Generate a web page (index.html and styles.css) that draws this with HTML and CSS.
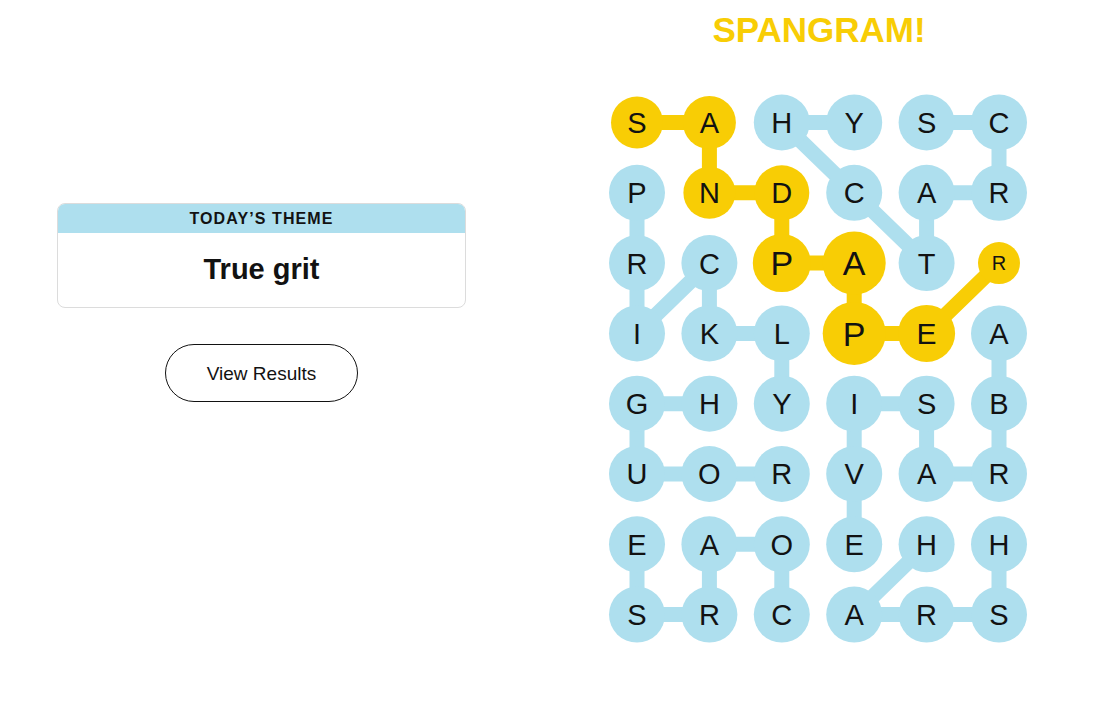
FILE: index.html
```html
<!DOCTYPE html>
<html lang="en">
<head>
<meta charset="utf-8">
<title>Strands</title>
<link rel="stylesheet" href="styles.css">
</head>
<body>
<main class="page">
  <section class="left">
    <div class="theme-card">
      <div class="theme-head">Today’s Theme</div>
      <div class="theme-body">True grit</div>
    </div>
    <button class="results-btn" type="button">View Results</button>
  </section>
  <section class="right">
    <h1 class="spangram">SPANGRAM!</h1>
    <svg class="board" width="440" height="560" viewBox="0 0 440 560" xmlns="http://www.w3.org/2000/svg">
      <g class="links blue">
        <polyline points="327.6,32.5 400,32.5 400,102.8 327.6,102.8 327.6,173.1 255.2,102.8 182.8,32.5 255.2,32.5"/>
        <polyline points="38,102.8 38,173.1 38,243.4 110.4,173.1 110.4,243.4 182.8,243.4 182.8,313.7"/>
        <polyline points="182.8,384 110.4,384 38,384 38,313.7 110.4,313.7"/>
        <polyline points="400,243.4 400,313.7 400,384 327.6,384 327.6,313.7 255.2,313.7 255.2,384 255.2,454.3"/>
        <polyline points="182.8,524.6 182.8,454.3 110.4,454.3 110.4,524.6 38,524.6 38,454.3"/>
        <polyline points="327.6,454.3 255.2,524.6 327.6,524.6 400,524.6 400,454.3"/>
      </g>
      <g class="links yellow">
        <polyline points="38,32.5 110.4,32.5 110.4,102.8 182.8,102.8 182.8,173.1 255.2,173.1 255.2,243.4 327.6,243.4 400,173.1"/>
      </g>
      <g class="dots blue">
        <circle cx="182.8" cy="32.5" r="28"/><circle cx="255.2" cy="32.5" r="28"/><circle cx="327.6" cy="32.5" r="28"/><circle cx="400" cy="32.5" r="28"/>
        <circle cx="38" cy="102.8" r="28"/><circle cx="255.2" cy="102.8" r="28"/><circle cx="327.6" cy="102.8" r="28"/><circle cx="400" cy="102.8" r="28"/>
        <circle cx="38" cy="173.1" r="28"/><circle cx="110.4" cy="173.1" r="28"/><circle cx="327.6" cy="173.1" r="28"/>
        <circle cx="38" cy="243.4" r="28"/><circle cx="110.4" cy="243.4" r="28"/><circle cx="182.8" cy="243.4" r="28"/><circle cx="400" cy="243.4" r="28"/>
        <circle cx="38" cy="313.7" r="28"/><circle cx="110.4" cy="313.7" r="28"/><circle cx="182.8" cy="313.7" r="28"/><circle cx="255.2" cy="313.7" r="28"/><circle cx="327.6" cy="313.7" r="28"/><circle cx="400" cy="313.7" r="28"/>
        <circle cx="38" cy="384" r="28"/><circle cx="110.4" cy="384" r="28"/><circle cx="182.8" cy="384" r="28"/><circle cx="255.2" cy="384" r="28"/><circle cx="327.6" cy="384" r="28"/><circle cx="400" cy="384" r="28"/>
        <circle cx="38" cy="454.3" r="28"/><circle cx="110.4" cy="454.3" r="28"/><circle cx="182.8" cy="454.3" r="28"/><circle cx="255.2" cy="454.3" r="28"/><circle cx="327.6" cy="454.3" r="28"/><circle cx="400" cy="454.3" r="28"/>
        <circle cx="38" cy="524.6" r="28"/><circle cx="110.4" cy="524.6" r="28"/><circle cx="182.8" cy="524.6" r="28"/><circle cx="255.2" cy="524.6" r="28"/><circle cx="327.6" cy="524.6" r="28"/><circle cx="400" cy="524.6" r="28"/>
      </g>
      <g class="dots yellow">
        <circle cx="38" cy="32.5" r="26"/>
        <circle cx="110.4" cy="32.5" r="26.5"/>
        <circle cx="110.4" cy="102.8" r="26"/>
        <circle cx="182.8" cy="102.8" r="27.5"/>
        <circle cx="182.8" cy="173.1" r="29"/>
        <circle cx="255.2" cy="173.1" r="31.5"/>
        <circle cx="255.2" cy="243.4" r="31.5"/>
        <circle cx="327.6" cy="243.4" r="28.5"/>
        <circle cx="400" cy="173.1" r="21"/>
      </g>
      <g class="letters">
        <text x="38" y="42.9">S</text><text x="110.4" y="42.9">A</text><text x="182.8" y="42.9">H</text><text x="255.2" y="42.9">Y</text><text x="327.6" y="42.9">S</text><text x="400" y="42.9">C</text>
        <text x="38" y="113.2">P</text><text x="110.4" y="113.2">N</text><text x="182.8" y="113.2">D</text><text x="255.2" y="113.2">C</text><text x="327.6" y="113.2">A</text><text x="400" y="113.2">R</text>
        <text x="38" y="183.5">R</text><text x="110.4" y="183.5">C</text><text class="big" x="182.8" y="185.3">P</text><text class="big" x="255.2" y="185.3">A</text><text x="327.6" y="183.5">T</text><text class="small" x="400" y="180.3">R</text>
        <text x="38" y="253.8">I</text><text x="110.4" y="253.8">K</text><text x="182.8" y="253.8">L</text><text class="big" x="255.2" y="255.6">P</text><text class="mid" x="327.6" y="254.1">E</text><text x="400" y="253.8">A</text>
        <text x="38" y="324.1">G</text><text x="110.4" y="324.1">H</text><text x="182.8" y="324.1">Y</text><text x="255.2" y="324.1">I</text><text x="327.6" y="324.1">S</text><text x="400" y="324.1">B</text>
        <text x="38" y="394.4">U</text><text x="110.4" y="394.4">O</text><text x="182.8" y="394.4">R</text><text x="255.2" y="394.4">V</text><text x="327.6" y="394.4">A</text><text x="400" y="394.4">R</text>
        <text x="38" y="464.7">E</text><text x="110.4" y="464.7">A</text><text x="182.8" y="464.7">O</text><text x="255.2" y="464.7">E</text><text x="327.6" y="464.7">H</text><text x="400" y="464.7">H</text>
        <text x="38" y="535">S</text><text x="110.4" y="535">R</text><text x="182.8" y="535">C</text><text x="255.2" y="535">A</text><text x="327.6" y="535">R</text><text x="400" y="535">S</text>
      </g>
    </svg>
  </section>
</main>
</body>
</html>
```
FILE: styles.css
```css
* { box-sizing: border-box; }
html, body {
  margin: 0;
  padding: 0;
  background: #ffffff;
  color: #121212;
  font-family: "Liberation Sans", Arial, sans-serif;
}
.page {
  display: flex;
  gap: 19px;
  width: 1096px;
  height: 705px;
}
.left {
  width: 523px;
  flex: none;
  display: flex;
  flex-direction: column;
  align-items: center;
  padding-top: 203px;
}
.theme-card {
  width: 409px;
  border: 1px solid #dcdcdc;
  border-radius: 8px;
  overflow: hidden;
}
.theme-head {
  height: 30px;
  margin: -1px -1px 0;
  background: #aedfee;
  font-size: 16px;
  font-weight: 700;
  letter-spacing: 1.1px;
  text-transform: uppercase;
  text-align: center;
  line-height: 31px;
}
.theme-body {
  height: 74px;
  display: flex;
  align-items: center;
  justify-content: center;
  font-size: 29px;
  font-weight: 700;
  padding-bottom: 2px;
}
.results-btn {
  margin-top: 36px;
  width: 193px;
  height: 58px;
  border: 1px solid #121212;
  border-radius: 29px;
  background: #ffffff;
  color: #121212;
  font-family: "Liberation Sans", Arial, sans-serif;
  font-size: 19px;
  padding: 2px 0 0;
}
.right {
  flex: 1;
  display: flex;
  flex-direction: column;
  align-items: center;
  padding-top: 10px;
}
.spangram {
  margin: 0 0 40px;
  font-size: 35px;
  line-height: 40px;
  font-weight: 700;
  color: #f8cd05;
}
.board { display: block; flex: none; }
.links polyline {
  fill: none;
  stroke-width: 15;
  stroke-linejoin: round;
}
.links.blue polyline { stroke: #aedfee; }
.links.yellow polyline { stroke: #f8cd05; }
.dots.blue circle { fill: #aedfee; }
.dots.yellow circle { fill: #f8cd05; }
.letters text {
  font-family: "Liberation Sans", Arial, sans-serif;
  font-size: 29px;
  fill: #121212;
  text-anchor: middle;
}
.letters text.big { font-size: 34px; }
.letters text.mid { font-size: 30px; }
.letters text.small { font-size: 20px; }
```
